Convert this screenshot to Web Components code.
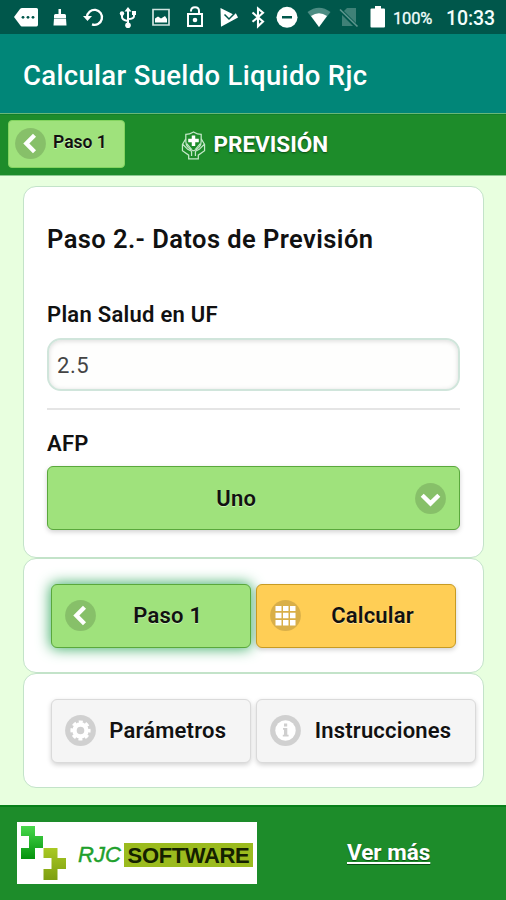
<!DOCTYPE html>
<html lang="es">
<head>
<meta charset="utf-8">
<title>Calcular Sueldo Liquido Rjc</title>
<style>
html,body{margin:0;height:100%;overflow:hidden}
body{background:#e8ffdf;font-family:Roboto,"Liberation Sans",sans-serif;color:#111}
</style>
</head>
<body>
<calc-app></calc-app>
<script>
const define = (name, html) => {
  const t = document.createElement('template');
  t.innerHTML = html;
  customElements.define(name, class extends HTMLElement {
    constructor() {
      super();
      this.attachShadow({ mode: 'open' }).append(t.content.cloneNode(true));
    }
  });
};

const discs = {
  left: '<path d="M19.5 7.2 11.3 15.5l8.2 8.3" fill="none" stroke="#fff" stroke-width="4.3"/>',
  down: '<path d="M7.2 12.2l8.3 8.2 8.3-8.2" fill="none" stroke="#fff" stroke-width="4.3"/>',
  grid: '<path fill="#fff" d="M5.5 6h6v5h-6zM13 6h5.500v5H13zM20 6h5.500v5H20zM5.500 12.700h6v5.500h-6zM13 12.700h5.500v5.500H13zM20 12.700h5.500v5.500H20zM5.500 20h6v5.500h-6zM13 20h5.500v5.500H13zM20 20h5.500v5.500H20z"/>',
  info: '<circle cx="15.5" cy="15.500" r="10.200" fill="#fff"/><path fill="#cfcfcf" d="M14 8.600h3.200v2.900H14zM13 13h4.300v6.800h1.300v1.700h-5.800v-1.700H14v-5h-1z"/>',
  gear: '<circle cx="15.500" cy="15.500" r="6" fill="none" stroke="#fff" stroke-width="4.400"/><circle cx="15.500" cy="15.500" r="8.600" fill="none" stroke="#fff" stroke-width="3" stroke-dasharray="3.900 2.854" stroke-dashoffset="1.950"/>'
};
customElements.define('disc-icon', class extends HTMLElement {
  connectedCallback() {
    this.attachShadow({ mode: 'open' }).innerHTML = `
      <style>:host{display:block;width:31px;height:31px;flex:none}svg{display:block}</style>
      <svg width="31" height="31" viewBox="0 0 31 31"><circle cx="15.500" cy="15.500" r="15.400" fill="#000" fill-opacity=".15"/>${discs[this.getAttribute('name')]}</svg>`;
  }
});

define('status-bar', `
<style>
:host{display:flex;height:34px;box-sizing:border-box;padding-left:14px;background:#00574b;color:#f2fffc;align-items:center}
svg{display:block;width:24px;height:34px;flex:none;fill:#fff}
.pct{font-size:16.500px;margin-left:3px;width:53px;padding-top:2px;letter-spacing:-.2px;white-space:nowrap;-webkit-text-stroke:.3px #f2fffc}
.time{font-size:19.500px;font-weight:500;padding-top:2px;letter-spacing:-.1px}
</style>
<svg viewBox="0 0 24 34"><path d="M8 8h14.500q1.500 0 1.500 1.500v15q0 2-1.500 2H8q-1 0-2-1.500L0 17 6 9q1-1 2-1z"/><g fill="#00574b"><circle cx="9" cy="17.300" r="1.400"/><circle cx="14" cy="17.300" r="1.400"/><circle cx="19" cy="17.300" r="1.400"/></g></svg>
<svg style="margin-left:10px" viewBox="0 0 24 34"><path d="M10.500 9h2.500v5h3.500q1.500 0 1.500 1.500V18H6v-2.500Q6 14 7.500 14h3zM6 18.500h12l.5 7h-13z"/></svg>
<svg style="margin-left:8.500px" viewBox="0 0 24 34"><path d="M6 17A7.500 7.500 0 1 1 11 24.400" fill="none" stroke="#fff" stroke-width="2.300"/><path d="M2 16h9l-4.500 5z"/></svg>
<svg style="margin-left:11.500px" viewBox="0 0 24 34"><path d="M12 10v14M6 13v4q0 3 6 4M18 13v3q0 3-6 3" fill="none" stroke="#fff" stroke-width="2"/><path d="M8.500 11.500 12 7l3.500 4.500zM16 11h4v4h-4z"/><circle cx="6" cy="13.500" r="2.200"/><circle cx="12" cy="25.300" r="2.800"/></svg>
<svg style="margin-left:9px" viewBox="0 0 24 34"><path d="M4 9.500h16v15.500H4z" fill="none" stroke="#cfe3df" stroke-width="1.700"/><path d="M6 22.500v-4l3-2 3 2 4-2.500 2 3v3.500z"/></svg>
<svg style="margin-left:10px" viewBox="0 0 24 34"><path d="M5 14h14v12H5z" fill="none" stroke="#fff" stroke-width="2"/><path d="M8 11.500v-.5q0-3.800 4-3.800t4 3.800v3" fill="none" stroke="#fff" stroke-width="2"/><circle cx="12" cy="20" r="2.300"/></svg>
<svg style="margin-left:10px" viewBox="0 0 24 34"><path d="M3.500 8l13 6.500 2-2 2.500 5L4 26.800z"/><path d="M7.500 14.500l4.500 4.500 7.500-7.500" fill="none" stroke="#00574b" stroke-width="1.500"/></svg>
<svg style="margin-left:5px" viewBox="0 0 24 34"><path d="M6.500 12.500l10.500 9-5 4.700V8.500l5 4.300-10.500 9" fill="none" stroke="#fff" stroke-width="2.100"/></svg>
<svg style="margin-left:4.500px" viewBox="0 0 24 34"><circle cx="12" cy="17.300" r="10.500"/><path d="M7 16h10v2.500H7z" fill="#00574b"/></svg>
<svg style="margin-left:8px" viewBox="0 0 24 34"><path d="M.5 12Q12 3.500 23.500 12L12 27z" fill="#4c8c83"/><path d="M4 16q8-5.500 16 0l-8 11z"/></svg>
<svg style="margin-left:6.500px" viewBox="0 0 24 34"><path d="M10 8h9v18H5V13z" fill="#3f8177"/><path d="M3 10l17 17" stroke="#00574b" stroke-width="4"/><path d="M3 9.500l17.500 17" stroke="#5d958d" stroke-width="1.700"/></svg>
<svg style="margin-left:5px" viewBox="0 0 24 34"><path d="M9 6h6v2.500h3q1 0 1 1v17q0 1-1 1H5.500q-1 0-1-1v-17q0-1 1-1H9z"/></svg>
<span class="pct">100%</span><span class="time">10:33</span>`);

define('title-bar', `
<style>:host{display:flex;align-items:center;height:79px;padding:4px 0 0 23px;box-sizing:border-box;background:#018678;color:#fff;font-size:27.500px;font-weight:500;letter-spacing:.32px;white-space:nowrap}</style>
<slot></slot>`);

define('step-bar', `
<style>
:host{display:flex;align-items:center;height:63px;box-sizing:border-box;border-top:1px solid #68b777;border-bottom:1px solid #8bc991;background:#1d8c2a;padding:0 0 2px 8px;box-shadow:inset 0 1px #12802a}
.back{display:flex;align-items:center;box-sizing:border-box;width:117px;height:48px;border-radius:4px;background:#9fe27c;border:1px solid #83d45f;padding-left:6px;gap:7px;font-size:17.500px;font-weight:600;text-shadow:0 1px #d2f5c0}
.back span{margin-top:-3px}
.emblem{margin:4px 0 0 55.500px;flex:none}
h1{font-size:22.500px;font-weight:700;color:#fff;margin:0 0 0 8px;text-shadow:0 1px 2px #0b4a14;white-space:nowrap}
</style>
<div class="back"><disc-icon name="left"></disc-icon><span>Paso 1</span></div>
<svg class="emblem" width="25" height="29" viewBox="0 0 26 30" fill="none" stroke="#c4e8c8" stroke-width="1.300"><path d="M5 3.500q4 0 8-2.500 4 2.500 8 2.500v7q0 7-8 10-8-3-8-10z"/><path d="M5 8l-3.500 6v6.500L8 25v4h10v-4l6.500-4.500V14L21 8M2 14l5 5 4 2v5M24 14l-5 5-4 2v5M6 13l5 6M20 13l-5 6"/><path d="M11.200 4.500h3.600V8h3.700v3.500h-3.700v4h-3.600v-4H7.500V8h3.700z" fill="#fff" stroke="none"/></svg>
<h1><slot></slot></h1>`);

define('form-card', `
<style>:host{display:block;box-sizing:border-box;background:#fff;border:1.500px solid #c3e3c9;border-radius:13px}</style>
<slot></slot>`);

define('action-button', `
<style>
:host{display:flex;align-items:center;box-sizing:border-box;height:64px;border-radius:6px;border:1.500px solid var(--edge);background:var(--fill);padding:0 13px;font-size:22px;font-weight:600;letter-spacing:.2px;box-shadow:var(--glow,0 2px 5px rgba(0,0,0,.18));text-shadow:0 1px var(--lift,#fff);white-space:nowrap}
.label{flex:1;text-align:center}
</style>
<slot name="start"></slot><span class="label"><slot></slot></span><slot name="end"></slot>`);

define('text-field', `
<style>
:host{display:flex;align-items:center;box-sizing:border-box;height:53px;border:2px solid #d0e5db;border-radius:14px;background:#fefefd;box-shadow:inset 0 1px 5px rgba(0,0,0,.14);padding:1px 8.500px 0;font-size:22px;color:#444;letter-spacing:.6px}
</style><slot></slot>`);

define('brand-footer', `
<style>
:host{display:flex;height:95px;box-sizing:border-box;border-top:2px solid #08801a;background:#1d8c2a;padding:15px 0 0 17px;align-items:flex-start}
.logo{display:flex;align-items:center;box-sizing:border-box;width:240px;height:62px;background:#fff;padding-left:3px;font-family:"Liberation Sans",Arial,sans-serif;font-size:22px;white-space:nowrap}
.logo svg{flex:none}
i{color:#20a02c;margin-left:12px;width:46px;padding-top:4px;-webkit-text-stroke:.4px #20a02c;letter-spacing:.1px}
b{font-weight:700;background:#9bbb1e;width:129px;height:24px;line-height:26px;text-align:center;margin-top:3px;color:#142000;font-size:22px;letter-spacing:-.35px}
a{margin:17px 0 0 90px;color:#fff;font-size:22.500px;font-weight:700;text-decoration:underline;text-decoration-thickness:2px;text-underline-offset:2px;text-shadow:0 1px 1px #0b4a14}
</style>
<div class="logo">
<svg width="46" height="56" viewBox="0 0 46 56"><defs><linearGradient id="g" x2="0" y2="1"><stop stop-color="#49d84c"/><stop offset="1" stop-color="#04930d"/></linearGradient><linearGradient id="y" x2="0" y2="1"><stop stop-color="#a9c923"/><stop offset="1" stop-color="#7d9e10"/></linearGradient></defs><path fill="url(#g)" d="M1 1h14v10h8v12h-8v11H1V23h8V11H1z"/><path fill="url(#y)" d="M23.500 23H37.500v10h8.500v11h-8.500v11h-14V44h8V33h-8z"/></svg>
<i>RJC</i><b>SOFTWARE</b></div>
<a>Ver más</a>`);

define('calc-app', `
<style>
:host{display:flex;flex-direction:column;height:900px;width:506px}
main{flex:1;padding:10px 22px 0 23px;display:flex;flex-direction:column}
.data{height:372px;padding:0 23px 0 22.500px}
.row{height:115px;padding:24.500px 0 0 26.500px}
.buttons{display:flex;gap:5px}
h2{font-size:25.500px;font-weight:600;margin:37px 0 0 .5px;line-height:30px;letter-spacing:.43px;white-space:nowrap}
label{display:block;font-size:22px;font-weight:600;line-height:26px;letter-spacing:.27px;margin-left:.5px}
hr{border:0;height:2px;background:#e5e5e5;margin:17px 0 21px}
action-button{--fill:#9fe27c;--edge:#5aa83c;--lift:#c9f2b4}
.gold{--fill:#ffce55;--edge:#c79b23;--lift:#ffe59c}
.gray{--fill:#f5f5f5;--edge:#dadada;--lift:#fff}
</style>
<status-bar></status-bar>
<title-bar>Calcular Sueldo Liquido Rjc</title-bar>
<step-bar>PREVISIÓN</step-bar>
<main>
<form-card class="data">
<h2>Paso 2.- Datos de Previsión</h2>
<label style="margin-top:48px">Plan Salud en UF</label>
<text-field style="margin-top:10px">2.5</text-field>
<hr>
<label>AFP</label>
<action-button style="margin-top:9px;padding-left:10px"><span>Uno</span><disc-icon slot="end" name="down"></disc-icon></action-button>
</form-card>
<form-card class="row"><div class="buttons">
<action-button style="width:200.500px;--glow:0 0 14px 1px #3fae68"><disc-icon slot="start" name="left"></disc-icon><span style="margin-left:3px">Paso 1</span></action-button>
<action-button class="gold" style="width:200px"><disc-icon slot="start" name="grid"></disc-icon><span style="margin-left:2px">Calcular</span></action-button>
</div></form-card>
<form-card class="row"><div class="buttons">
<action-button class="gray" style="width:200.500px;padding-right:10px"><disc-icon slot="start" name="gear"></disc-icon>Parámetros</action-button>
<action-button class="gray" style="width:220px;padding-right:10px"><disc-icon slot="start" name="info"></disc-icon>Instrucciones</action-button>
</div></form-card>
</main>
<brand-footer></brand-footer>`);
</script>
</body>
</html>
